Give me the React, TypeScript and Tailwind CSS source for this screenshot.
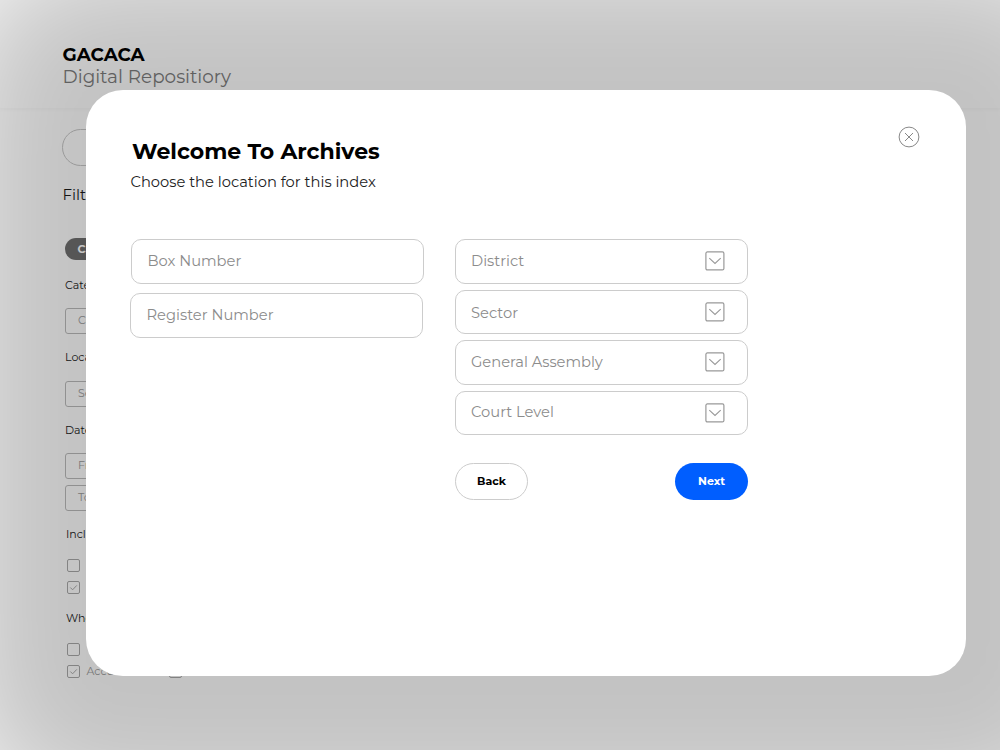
import clsx from 'clsx';

const Header = () => {
    return (
        <header className="h-[108px] pl-[62.5px] pt-[44px] shadow-[0_1px_5px_rgba(0,0,0,0.04)]">
            <h1 className="text-[18.4px] leading-[22px] font-bold text-black">GACACA</h1>
            <h2 className="text-[18.4px] leading-[22px] text-[#7d7d7d]">Digital Repositiory</h2>
        </header>
    )
}

const Check = ({ checked, label = '' }: { checked?: boolean, label?: string }) => {
    return (
        <div className="flex h-[22px] items-center gap-[7px] pl-[1.5px]">
            <svg className="h-[13px] w-[13px]" viewBox="0 0 13 13" fill="none" stroke="#aaa">
                <rect x="0.5" y="0.5" width="12" height="12" rx="1.5" />
                {checked && <path d="M3.3 6.5l2.3 2.3 4.2-4.4" />}
            </svg>
            <span className="w-[76px] text-[11px] text-[#9c9c9c]">{label}</span>
        </div>
    )
}

const Label = ({ text, className }: { text: string, className?: string }) => {
    return <p className={clsx('h-4 text-[11px] leading-4 text-[#222]', className)}>{text}</p>
}

const FilterBox = ({ text, className }: { text: string, className?: string }) => {
    return (
        <div className={clsx('flex h-[26px] w-[180px] items-center rounded-[3px] border border-[#bcbcbc] pb-px pl-3 text-[11px] text-[#9c9c9c]', className)}>
            {text}
        </div>
    )
}

const Filters = () => {
    return (
        <aside className="pl-[65px] pt-[21px]">
            <div className="-ml-[3px] h-[37px] w-[400px] rounded-full border border-[#c8c8c8]"></div>
            <h3 className="-ml-[2.5px] mt-[19px] text-[15px] leading-5 text-[#1c1c1c]">Filters</h3>
            <div className="mt-[33px] flex h-[22px] w-24 items-center rounded-full bg-[#707070] pl-[12.5px] text-[11px] font-bold text-white">Cases</div>
            <Label text="Category" className="mt-[17px]" />
            <FilterBox text="Category" className="mt-[15px]" />
            <Label text="Location" className="mt-[15px]" />
            <FilterBox text="Sector" className="mt-4" />
            <Label text="Date" className="mt-[15px]" />
            <FilterBox text="From" className="mt-[15px]" />
            <FilterBox text="To" className="mt-1.5" />
            <Label text="Include" className="mt-[15px] pl-px" />
            <div className="mt-3">
                <Check />
                <Check checked />
            </div>
            <Label text="Who" className="mt-3 pl-px" />
            <div className="mt-3">
                <Check />
                <div className="flex">
                    <Check checked label="Accused" />
                    <div className="ml-[5px]"><Check /></div>
                </div>
            </div>
        </aside>
    )
}

const Input = ({ placeholder, className }: { placeholder: string, className?: string }) => {
    return (
        <div className={clsx('flex h-[44.5px] w-[293px] items-center rounded-[10px] border border-[#ccc] pb-px pl-[15.5px] text-[14.7px] text-[#8c8c8c]', className)}>
            {placeholder}
        </div>
    )
}

const Select = ({ placeholder, className }: { placeholder: string, className?: string }) => {
    return (
        <div className="flex h-[44.5px] w-[293px] items-center justify-between rounded-[10px] border border-[#ccc] pl-[15px] pr-[22px] text-[14.7px] text-[#8c8c8c]">
            <span className={className}>{placeholder}</span>
            <svg className="h-5 w-5" viewBox="0 0 20 20" fill="none" stroke="#999">
                <rect x="0.9" y="0.9" width="18" height="18" rx="1.5" strokeWidth="1.2" />
                <path d="M4.3 7.1l5.7 5.4 5.7-5.4" strokeWidth="1.1" />
            </svg>
        </div>
    )
}

const Modal = () => {
    return (
        <div className="absolute left-[86px] top-[90px] h-[586px] w-[880px] rounded-[37px] bg-white pl-[44px] pt-[47px] shadow-[10px_5px_130px_140px_rgba(0,0,0,0.24)]">
            <div className="flex justify-between pr-[46px]">
                <div>
                    <h2 className="pl-[2px] pt-px text-[22px] leading-7 font-bold text-black">Welcome To Archives</h2>
                    <p className="mt-1.5 pl-[0.5px] text-[14.7px] leading-5 text-[#222]">Choose the location for this index</p>
                </div>
                <button className="-mt-[11px] h-[22px] w-[22px]">
                    <svg className="h-[22px] w-[22px]" viewBox="0 0 22 22" fill="none" stroke="#888">
                        <circle cx="11" cy="11" r="9.9" />
                        <path d="M7 7l8 8M15 7l-8 8" />
                    </svg>
                </button>
            </div>
            <div className="mt-[47px] flex">
                <div className="flex w-[325px] flex-col gap-[9.5px]">
                    <Input placeholder="Box Number" className="ml-px" />
                    <Input placeholder="Register Number" />
                </div>
                <div>
                    <div className="flex flex-col gap-1.5">
                        <Select placeholder="District" className="pb-px" />
                        <Select placeholder="Sector" className="pt-[2px]" />
                        <Select placeholder="General Assembly" />
                        <Select placeholder="Court Level" className="pb-px" />
                    </div>
                    <div className="mt-7 flex justify-between text-[11px] font-bold">
                        <button className="h-[37px] w-[73px] rounded-full border border-[#ccc] text-black">Back</button>
                        <button className="h-[37px] w-[73px] rounded-full bg-[#005eff] text-white">Next</button>
                    </div>
                </div>
            </div>
        </div>
    )
}

const App = () => {
    return (
        <div className="relative h-[750px] w-[1000px] overflow-hidden bg-white font-['Montserrat','Inter',sans-serif]">
            <Header />
            <Filters />
            <Modal />
        </div>
    )
}

export default App
